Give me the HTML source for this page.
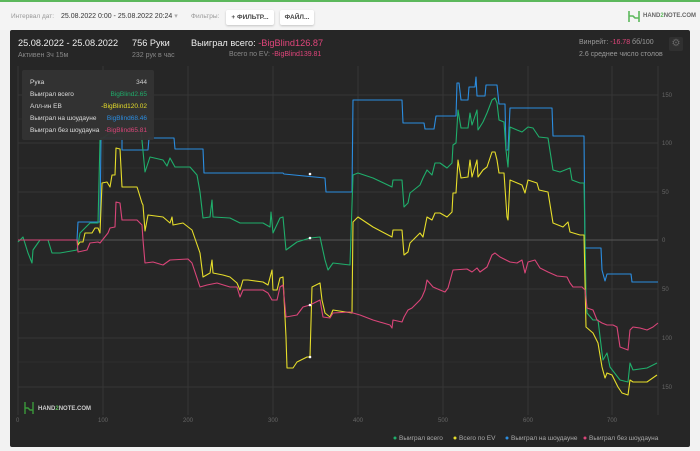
<!DOCTYPE html><html><head><meta charset="utf-8"><style>
body{margin:0;width:700px;height:451px;background:#f2f2f2;font-family:"Liberation Sans",sans-serif;overflow:hidden;position:relative}
.top{position:absolute;left:0;top:0;width:700px;height:30px;background:#f4f4f4;border-top:2px solid #5cb85c;box-sizing:border-box}
.t{position:absolute;white-space:nowrap}
.btn{position:absolute;top:8px;height:15px;background:#fff;border-radius:2px;box-shadow:0 1px 2px rgba(0,0,0,.2);font-size:6.5px;font-weight:bold;color:#444;line-height:15px;text-align:center}
.panel{position:absolute;left:10px;top:30px;width:680px;height:417px;background:#262626;border-radius:2px}
</style></head><body>
<div class="top">
<div class="t" style="left:11px;top:11px;font-size:6.5px;color:#999">Интервал дат:</div>
<div class="t" style="left:61px;top:10px;font-size:7px;color:#333">25.08.2022 0:00 - 25.08.2022 20:24 <span style="color:#aaa">▾</span></div>
<div class="t" style="left:191px;top:11px;font-size:6.5px;color:#999">Фильтры:</div>
<div class="btn" style="left:226px;width:48px">+ ФИЛЬТР...</div>
<div class="btn" style="left:280px;width:34px">ФАЙЛ...</div>
<svg style="position:absolute;left:628px;top:8px" width="12" height="13"><path d="M1 1v11M11 1v11M1 6h4l2 2h4" stroke="#5cb85c" stroke-width="1.6" fill="none"/></svg>
<div class="t" style="left:643px;top:11px;font-size:6px;font-weight:bold;color:#666">HAND<span style="color:#5cb85c">2</span>NOTE.COM</div>
</div>
<div class="panel"></div>
<div class="t" style="left:18px;top:38px;font-size:9.2px;color:#eee">25.08.2022 - 25.08.2022</div>
<div class="t" style="left:18px;top:52px;font-size:7px;color:#888">Активен 3ч 15м</div>
<div class="t" style="left:132px;top:38px;font-size:9.2px;color:#eee">756 Руки</div>
<div class="t" style="left:132px;top:52px;font-size:7px;color:#888">232 рук в час</div>
<div class="t" style="left:191px;top:38px;font-size:9.2px;color:#eee">Выиграл всего: <span style="color:#e0457b">-BigBlind126.87</span></div>
<div class="t" style="left:229px;top:51px;font-size:7px;color:#888">Всего по EV: <span style="color:#e0457b">-BigBlind139.81</span></div>
<div class="t" style="left:579px;top:39px;font-size:7px;color:#999">Винрейт: <span style="color:#e0457b">-16.78</span> бб/100</div>
<div class="t" style="left:579px;top:51px;font-size:7px;color:#999">2.6 среднее число столов</div>
<div style="position:absolute;left:669px;top:37px;width:14px;height:14px;border-radius:2px;background:#303030;color:#666;font-size:10px;text-align:center;line-height:14px">⚙</div>
<svg style="position:absolute;left:0;top:0" width="700" height="451">
<g stroke="#2e2e2e" stroke-width="1">
<line x1="18" y1="119" x2="658" y2="119"/><line x1="18" y1="168" x2="658" y2="168"/><line x1="18" y1="216" x2="658" y2="216"/><line x1="18" y1="265" x2="658" y2="265"/><line x1="18" y1="313" x2="658" y2="313"/><line x1="18" y1="362" x2="658" y2="362"/>
</g>
<g stroke="#363636" stroke-width="1">
<line x1="18" y1="95" x2="658" y2="95"/><line x1="18" y1="143" x2="658" y2="143"/><line x1="18" y1="192" x2="658" y2="192"/><line x1="18" y1="289" x2="658" y2="289"/><line x1="18" y1="338" x2="658" y2="338"/><line x1="18" y1="387" x2="658" y2="387"/>
<line x1="18" y1="66" x2="18" y2="415"/><line x1="103" y1="66" x2="103" y2="415"/><line x1="188" y1="66" x2="188" y2="415"/><line x1="273" y1="66" x2="273" y2="415"/><line x1="358" y1="66" x2="358" y2="415"/><line x1="443" y1="66" x2="443" y2="415"/><line x1="528" y1="66" x2="528" y2="415"/><line x1="612" y1="66" x2="612" y2="415"/><line x1="658" y1="66" x2="658" y2="415"/>
</g>
<line x1="18" y1="240" x2="658" y2="240" stroke="#555"/>
<g font-size="6" fill="#666" font-family="Liberation Sans">
<text x="662" y="97">150</text><text x="662" y="145">100</text><text x="662" y="194">50</text><text x="662" y="242">0</text><text x="662" y="291">50</text><text x="662" y="340">100</text><text x="662" y="389">150</text>
<text x="16" y="422">0</text><text x="98" y="422">100</text><text x="183" y="422">200</text><text x="268" y="422">300</text><text x="353" y="422">400</text><text x="438" y="422">500</text><text x="523" y="422">600</text><text x="607" y="422">700</text>
</g>
<g fill="none" stroke-width="1.1" stroke-linejoin="round">
<polyline stroke="#2b8de0" points="18,240 77,240 78,222 100,222 101,138 122,138 122,150 148,150 149,138 174,138 175,149 203,149 204,173 283,173 284,174 325,178 326,192 352,192 353,100 402,100 403,123 424,123 425,129 434,129 436,116 456,116 457,83 459,83 461,100 468,100 469,87 475,87 476,77 477,96 485,96 486,85 497,85 499,104 505,104 506,150 508,150 510,108 552,108 553,136 584,136 585,248 601,248 602,270 605,281 607,274 631,274 632,282 658,282"/>
<polyline stroke="#1fae6b" points="18,242 23,237 28,253 32,263 33,250 40,240 48,240 52,253 60,253 77,250 80,233 90,223 98,223 100,140 110,133 120,133 141,130 145,172 150,157 163,160 167,166 170,158 175,167 190,167 197,175 200,192 203,218 210,217 212,200 213,217 230,218 240,223 263,223 270,227 271,212 273,233 280,218 283,217 286,250 297,242 310,238 320,237 325,260 328,270 333,263 350,265 353,175 358,173 373,178 392,187 393,180 402,180 404,207 408,203 410,193 420,185 423,178 427,170 432,175 435,163 440,163 447,168 452,163 453,145 456,143 458,110 461,128 468,128 470,113 472,125 477,110 478,130 483,122 487,113 492,100 495,98 497,103 499,120 504,122 506,150 508,167 510,127 517,130 522,132 528,127 533,128 539,137 548,138 553,170 560,172 570,168 572,180 580,183 584,183 586,293 587,313 593,320 598,320 602,353 603,360 607,353 610,367 620,380 628,382 630,363 633,370 647,368 657,363"/>
<polyline stroke="#e6dd2a" points="18,240 77,240 78,245 80,242 83,242 85,233 92,233 95,228 98,228 100,233 102,183 107,182 110,187 112,175 115,175 116,148 120,149 122,187 137,187 138,190 142,203 143,205 145,231 148,215 163,217 170,223 172,217 173,225 183,223 192,230 200,253 203,277 210,273 212,260 213,273 223,275 230,277 237,283 240,290 243,280 248,280 263,282 268,285 272,270 273,290 277,290 280,278 283,277 286,337 287,368 293,368 297,362 307,357 310,357 312,287 320,283 322,300 325,313 330,317 333,310 352,313 353,222 358,217 373,227 392,237 393,230 402,230 404,255 408,252 410,243 420,233 423,237 427,217 432,220 435,213 440,213 447,217 452,212 453,193 456,193 458,160 461,178 468,177 470,160 472,177 477,160 478,177 483,170 487,167 492,152 495,152 497,160 499,173 504,173 507,217 508,220 510,180 522,185 525,193 528,180 537,183 539,190 548,192 553,223 563,227 568,222 570,232 580,235 584,235 586,327 593,333 598,343 602,367 605,378 607,373 612,375 618,387 622,393 628,395 630,380 633,382 647,382 657,375"/>
<polyline stroke="#d94579" points="18,240 77,240 78,252 87,250 90,243 98,242 100,243 108,233 110,228 115,227 116,202 120,203 122,220 137,220 142,225 143,240 145,263 153,262 163,265 170,260 188,259 192,263 200,287 207,285 217,283 230,287 237,287 240,297 243,290 263,290 268,293 272,300 277,300 280,287 283,285 286,317 297,315 303,307 310,305 320,300 323,317 330,318 333,313 350,312 353,313 360,315 373,320 390,325 392,328 393,320 402,322 404,317 408,310 412,308 420,300 422,297 425,290 427,280 433,287 440,290 445,292 448,288 453,270 467,269 472,272 477,268 480,272 487,267 492,255 495,253 500,257 510,262 517,263 522,260 525,273 528,262 535,260 540,268 548,272 557,276 567,277 570,283 573,287 582,287 585,290 587,308 593,310 597,320 602,323 607,325 613,325 617,327 620,347 628,350 630,330 633,327 640,328 647,330 653,327 658,323"/>
</g>
<g fill="#fff"><circle cx="310" cy="174" r="1.3"/><circle cx="310" cy="238" r="1.3"/><circle cx="310" cy="305" r="1.3"/><circle cx="310" cy="357" r="1.3"/></g>
<g font-size="6.5" fill="#aaa" font-family="Liberation Sans">
<circle cx="395" cy="438" r="1.5" fill="#1fae6b"/><text x="399" y="440">Выиграл всего</text>
<circle cx="455" cy="438" r="1.5" fill="#e6dd2a"/><text x="459" y="440">Всего по EV</text>
<circle cx="507" cy="438" r="1.5" fill="#2b8de0"/><text x="511" y="440">Выиграл на шоудауне</text>
<circle cx="585" cy="438" r="1.5" fill="#d94579"/><text x="589" y="440">Выиграл без шоудауна</text>
</g>
<rect x="22" y="70" width="132" height="70" rx="2" fill="#333" fill-opacity=".95"/>
<g font-size="6.5" font-family="Liberation Sans">
<text x="30" y="84" fill="#ddd">Рука</text><text x="147" y="84" fill="#ccc" text-anchor="end">344</text>
<text x="30" y="96" fill="#ddd">Выиграл всего</text><text x="147" y="96" fill="#1fae6b" text-anchor="end">BigBlind2.65</text>
<text x="30" y="108" fill="#ddd">Алл-ин EB</text><text x="147" y="108" fill="#e6dd2a" text-anchor="end">-BigBlind120.02</text>
<text x="30" y="120" fill="#ddd">Выиграл на шоудауне</text><text x="147" y="120" fill="#2b8de0" text-anchor="end">BigBlind68.46</text>
<text x="30" y="132" fill="#ddd">Выиграл без шоудауна</text><text x="147" y="132" fill="#d94579" text-anchor="end">-BigBlind65.81</text>
</g>
<path d="M25 402v12M33 402v12M25 408h3l2 2h3" stroke="#3a9a3a" stroke-width="1.4" fill="none"/>
<text x="38" y="410" font-size="6" font-weight="bold" fill="#ccc" font-family="Liberation Sans">HAND<tspan fill="#5cb85c">2</tspan>NOTE.COM</text>
</svg>
</body></html>
